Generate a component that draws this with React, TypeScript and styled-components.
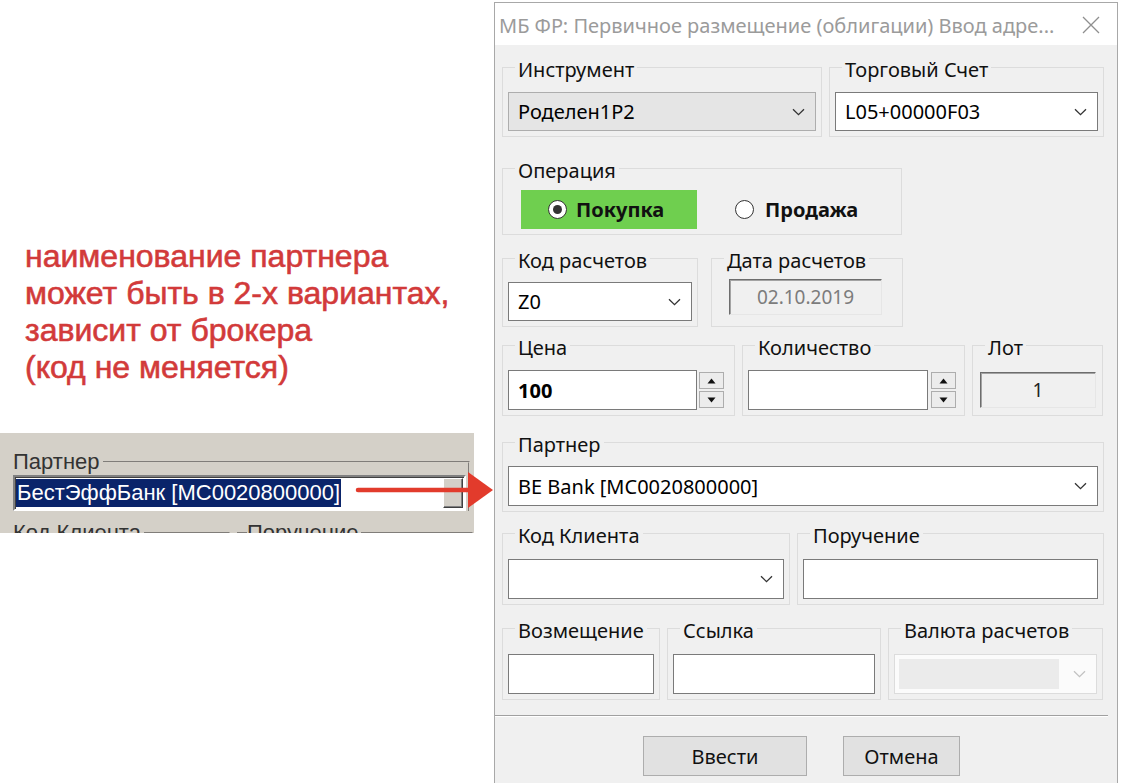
import React from "react";
import styled, { createGlobalStyle } from "styled-components";

const GlobalStyle = createGlobalStyle`
  html, body { margin: 0; padding: 0; background: #ffffff; }
  body {
    width: 1140px;
    height: 783px;
    overflow: hidden;
    font-family: "Noto Sans", "Open Sans", sans-serif;
  }
  *, *::before, *::after { box-sizing: border-box; }
`;

const Page = styled.div`
  position: relative;
  display: flex;
  align-items: flex-start;
  width: 1140px;
  height: 783px;
  overflow: hidden;
`;

/* ---------- left annotation ---------- */

const LeftPane = styled.div`
  flex: none;
  width: 494px;
  display: flex;
  flex-direction: column;
`;

const Note = styled.p`
  margin: 238px 0 0 25px;
  font-family: "Liberation Sans", Arial, sans-serif;
  font-size: 32px;
  line-height: 37px;
  color: #d23a3a;
  -webkit-text-stroke: 0.6px #d23a3a;
`;

const Inset = styled.div`
  margin-top: 47px;
  width: 474px;
  height: 100px;
  background: #d4d0c8;
  overflow: hidden;
  padding-top: 16px;
  font-family: "Liberation Sans", Arial, sans-serif;
  font-size: 22px;
  color: #2a2a2a;
`;

const InsetRow = styled.div<{ $mt?: number }>`
  display: flex;
  margin-top: ${(p) => p.$mt ?? 0}px;
`;

const ClassicGroup = styled.fieldset<{ $w: number; $ml: number; $left?: boolean }>`
  flex: none;
  margin: 0 0 0 ${(p) => p.$ml}px;
  width: ${(p) => p.$w}px;
  min-width: 0;
  padding: 0;
  border: 2px groove #d4d0c8;
  border-left: ${(p) => (p.$left ? "2px groove #d4d0c8" : "none")};
  border-bottom: none;
`;

const ClassicLegend = styled.legend<{ $ml?: number }>`
  margin-left: ${(p) => p.$ml ?? 0}px;
  padding: 0 3px 0 0;
  font-size: 22px;
  line-height: 26px;
  color: #333;
`;

const ClassicField = styled.div`
  width: 453px;
  height: 36px;
  display: flex;
  align-items: center;
  justify-content: space-between;
  background: #ffffff;
  border: 2px solid;
  border-color: #808080 #ffffff #ffffff #808080;
  box-shadow: inset 1px 1px #404040;
  padding-right: 1px;
`;

const Selection = styled.span`
  margin-left: 1px;
  padding: 0 1px;
  background: #0a246a;
  color: #ffffff;
  line-height: 28px;
  font-size: 22px;
  white-space: nowrap;
`;

const ClassicDrop = styled.div`
  width: 20px;
  height: 30px;
  background: #d4d0c8;
  border: 1px solid;
  border-color: #ffffff #404040 #404040 #ffffff;
  box-shadow: inset -1px -1px #808080;
`;

const Arrow = styled.svg`
  position: absolute;
  left: 355px;
  top: 468px;
`;

/* ---------- dialog ---------- */

const Dialog = styled.section`
  flex: none;
  width: 624px;
  height: 781px;
  margin-top: 2px;
  background: #f0f0f0;
  border: 1px solid #a8a8a8;
  border-bottom: none;
  display: flex;
  flex-direction: column;
`;

const TitleBar = styled.header`
  flex: none;
  height: 42px;
  background: #ffffff;
  display: flex;
  align-items: center;
  justify-content: space-between;
  padding: 2px 17px 0 4px;
  color: #9b9b9b;
  font-size: 20px;
  white-space: nowrap;
`;

const Body = styled.div`
  display: flex;
  flex-direction: column;
  padding: 7px 12px 0 7px;
`;

const Row = styled.div<{ $mt?: number; $gap?: number }>`
  display: flex;
  gap: ${(p) => p.$gap ?? 7}px;
  margin-top: ${(p) => p.$mt ?? 0}px;
`;

const Group = styled.fieldset<{ $w: number; $pt?: number }>`
  flex: none;
  width: ${(p) => p.$w}px;
  min-width: 0;
  margin: 0;
  padding: ${(p) => p.$pt ?? 10}px 5px 5px 5px;
  border: 1px solid #dcdcdc;
  display: flex;
  align-items: center;
`;

const Caption = styled.legend`
  margin-left: 7px;
  padding: 6px 3px 0;
  font-size: 20px;
  line-height: 24px;
  color: #111111;
  white-space: nowrap;
`;

type Tone = "white" | "grey" | "disabled";

const ComboBox = styled.div<{ $tone?: Tone; $h?: number }>`
  flex: 1;
  min-width: 0;
  height: ${(p) => p.$h ?? 40}px;
  display: flex;
  align-items: center;
  justify-content: space-between;
  padding: 0 10px 0 9px;
  border: 1px solid
    ${(p) => (p.$tone === "grey" ? "#adadad" : p.$tone === "disabled" ? "#dcdcdc" : "#7a7a7a")};
  background: ${(p) => (p.$tone === "grey" ? "#e5e5e5" : p.$tone === "disabled" ? "#fbfbfb" : "#ffffff")};
  font-size: 20px;
  color: #000000;
  white-space: nowrap;
`;

const DisabledFill = styled.div`
  align-self: stretch;
  width: 160px;
  margin: 4px 0 4px -5px;
  background: #ebebeb;
`;

const TextBox = styled.div<{ $w?: number; $bold?: boolean }>`
  flex: ${(p) => (p.$w ? "none" : "1")};
  width: ${(p) => (p.$w ? `${p.$w}px` : "auto")};
  min-width: 0;
  height: 40px;
  display: flex;
  align-items: center;
  padding-left: 9px;
  background: #ffffff;
  border: 1px solid #7a7a7a;
  font-size: 20px;
  font-weight: ${(p) => (p.$bold ? 700 : 400)};
  color: #000000;
`;

const SunkenField = styled.div<{ $w: number; $ml: number; $top?: boolean; $color: string }>`
  flex: none;
  align-self: ${(p) => (p.$top ? "flex-start" : "center")};
  width: ${(p) => p.$w}px;
  height: 36px;
  margin-left: ${(p) => p.$ml}px;
  display: flex;
  align-items: center;
  justify-content: center;
  background: #f0f0f0;
  border: 1px solid;
  border-color: #6d6d6d #e6e6e6 #e6e6e6 #6d6d6d;
  box-shadow: inset 1px 1px #a3a3a3;
  font-size: 19px;
  color: ${(p) => p.$color};
`;

const Spinner = styled.div<{ $ml: number }>`
  flex: none;
  display: flex;
  flex-direction: column;
  gap: 2px;
  margin-left: ${(p) => p.$ml}px;
`;

const SpinButton = styled.div`
  width: 25px;
  height: 17px;
  display: flex;
  align-items: center;
  justify-content: center;
  background: #ececec;
  border: 1px solid #adadad;
`;

const GreenOption = styled.div`
  flex: none;
  width: 176px;
  height: 39px;
  margin-left: 13px;
  display: flex;
  align-items: center;
  gap: 9px;
  padding-left: 27px;
  background: #6fcf4f;
  font-size: 20px;
  font-weight: 700;
  color: #111111;
`;

const PlainOption = styled.div`
  display: flex;
  align-items: center;
  gap: 11px;
  margin-left: 38px;
  font-size: 20px;
  font-weight: 700;
  color: #111111;
`;

const RadioCircle = styled.span`
  width: 19px;
  height: 19px;
  border-radius: 50%;
  border: 1.5px solid #333333;
  background: #ffffff;
  display: flex;
  align-items: center;
  justify-content: center;
`;

const RadioDot = styled.span`
  width: 9px;
  height: 9px;
  border-radius: 50%;
  background: #333333;
`;

const Separator = styled.hr`
  height: 0;
  margin: 15px -3px 0 -7px;
  border: none;
  border-top: 1px solid #a0a0a0;
  border-bottom: 1px solid #ffffff;
`;

const ButtonRow = styled.div`
  display: flex;
  gap: 36px;
  margin-top: 19px;
  padding-left: 141px;
`;

const Button = styled.button<{ $w: number }>`
  width: ${(p) => p.$w}px;
  height: 40px;
  background: #e1e1e1;
  border: 1px solid #adadad;
  font-family: inherit;
  font-size: 20px;
  color: #111111;
  padding: 0;
`;

/* ---------- icons ---------- */

const Chevron = ({ color = "#333" }: { color?: string }) => (
  <svg width="13" height="8" viewBox="0 0 13 8">
    <path d="M1 1.2 L6.5 6.6 L12 1.2" fill="none" stroke={color} strokeWidth="1.3" />
  </svg>
);

const Tri = ({ up }: { up: boolean }) => (
  <svg width="9" height="6" viewBox="0 0 9 6">
    <polygon points={up ? "0.5,5.5 4.5,0.5 8.5,5.5" : "0.5,0.5 4.5,5.5 8.5,0.5"} fill="#111" />
  </svg>
);

const CloseIcon = () => (
  <svg width="18" height="18" viewBox="0 0 18 18">
    <path d="M1 1 L17 17 M17 1 L1 17" stroke="#8f8f8f" strokeWidth="1.3" fill="none" />
  </svg>
);

const Spin = ({ ml }: { ml: number }) => (
  <Spinner $ml={ml}>
    <SpinButton>
      <Tri up />
    </SpinButton>
    <SpinButton>
      <Tri up={false} />
    </SpinButton>
  </Spinner>
);

export default function App() {
  return (
    <>
      <GlobalStyle />
      <Page>
        <LeftPane>
          <Note>
            наименование партнера
            <br />
            может быть в 2-х вариантах,
            <br />
            зависит от брокера
            <br />
            (код не меняется)
          </Note>
          <Inset>
            <ClassicGroup $w={457} $ml={13}>
              <ClassicLegend>Партнер</ClassicLegend>
              <ClassicField>
                <Selection>БестЭффБанк [MC0020800000]</Selection>
                <ClassicDrop />
              </ClassicField>
            </ClassicGroup>
            <InsetRow $mt={9}>
              <ClassicGroup $w={217} $ml={13}>
                <ClassicLegend>Код Клиента</ClassicLegend>
              </ClassicGroup>
              <ClassicGroup $w={236} $ml={7} $left>
                <ClassicLegend $ml={8}>Поручение</ClassicLegend>
              </ClassicGroup>
            </InsetRow>
          </Inset>
        </LeftPane>

        <Dialog>
          <TitleBar>
            <span>МБ ФР: Первичное размещение (облигации) Ввод адре...</span>
            <CloseIcon />
          </TitleBar>
          <Body>
            <Row>
              <Group $w={320}>
                <Caption>Инструмент</Caption>
                <ComboBox $tone="grey" $h={39}>
                  Роделен1P2
                  <Chevron />
                </ComboBox>
              </Group>
              <Group $w={275}>
                <Caption>Торговый Счет</Caption>
                <ComboBox $h={39}>
                  L05+00000F03
                  <Chevron />
                </ComboBox>
              </Group>
            </Row>

            <Row $mt={16}>
              <Group $w={400} $pt={7}>
                <Caption>Операция</Caption>
                <GreenOption>
                  <RadioCircle>
                    <RadioDot />
                  </RadioCircle>
                  Покупка
                </GreenOption>
                <PlainOption>
                  <RadioCircle />
                  Продажа
                </PlainOption>
              </Group>
            </Row>

            <Row $mt={8} $gap={13}>
              <Group $w={196} $pt={9}>
                <Caption>Код расчетов</Caption>
                <ComboBox $h={39}>
                  Z0
                  <Chevron />
                </ComboBox>
              </Group>
              <Group $w={192} $pt={6}>
                <Caption>Дата расчетов</Caption>
                <SunkenField $w={153} $ml={12} $top $color="#7c7c7c">
                  02.10.2019
                </SunkenField>
              </Group>
            </Row>

            <Row $mt={3}>
              <Group $w={233}>
                <Caption>Цена</Caption>
                <TextBox $w={189} $bold>
                  100
                </TextBox>
                <Spin ml={2} />
              </Group>
              <Group $w={223}>
                <Caption>Количество</Caption>
                <TextBox $w={180} />
                <Spin ml={3} />
              </Group>
              <Group $w={131}>
                <Caption>Лот</Caption>
                <SunkenField $w={116} $ml={2} $color="#222222">
                  1
                </SunkenField>
              </Group>
            </Row>

            <Row $mt={11}>
              <Group $w={602} $pt={9}>
                <Caption>Партнер</Caption>
                <ComboBox>
                  BE Bank [MC0020800000]
                  <Chevron />
                </ComboBox>
              </Group>
            </Row>

            <Row $mt={6}>
              <Group $w={288} $pt={11}>
                <Caption>Код Клиента</Caption>
                <ComboBox>
                  <span />
                  <Chevron />
                </ComboBox>
              </Group>
              <Group $w={307} $pt={11}>
                <Caption>Поручение</Caption>
                <TextBox />
              </Group>
            </Row>

            <Row $mt={8}>
              <Group $w={158} $pt={11}>
                <Caption>Возмещение</Caption>
                <TextBox />
              </Group>
              <Group $w={214} $pt={11}>
                <Caption>Ссылка</Caption>
                <TextBox />
              </Group>
              <Group $w={215} $pt={11}>
                <Caption>Валюта расчетов</Caption>
                <ComboBox $tone="disabled">
                  <DisabledFill />
                  <Chevron color="#c2c2c2" />
                </ComboBox>
              </Group>
            </Row>

            <Separator />

            <ButtonRow>
              <Button $w={164}>Ввести</Button>
              <Button $w={117}>Отмена</Button>
            </ButtonRow>
          </Body>
        </Dialog>

        <Arrow width="140" height="42" viewBox="0 0 140 42">
          <line x1="3" y1="22" x2="118" y2="22" stroke="#e23b2c" strokeWidth="4.5" strokeLinecap="round" />
          <polygon points="113,4 138,22 113,40" fill="#e23b2c" />
        </Arrow>
      </Page>
    </>
  );
}
